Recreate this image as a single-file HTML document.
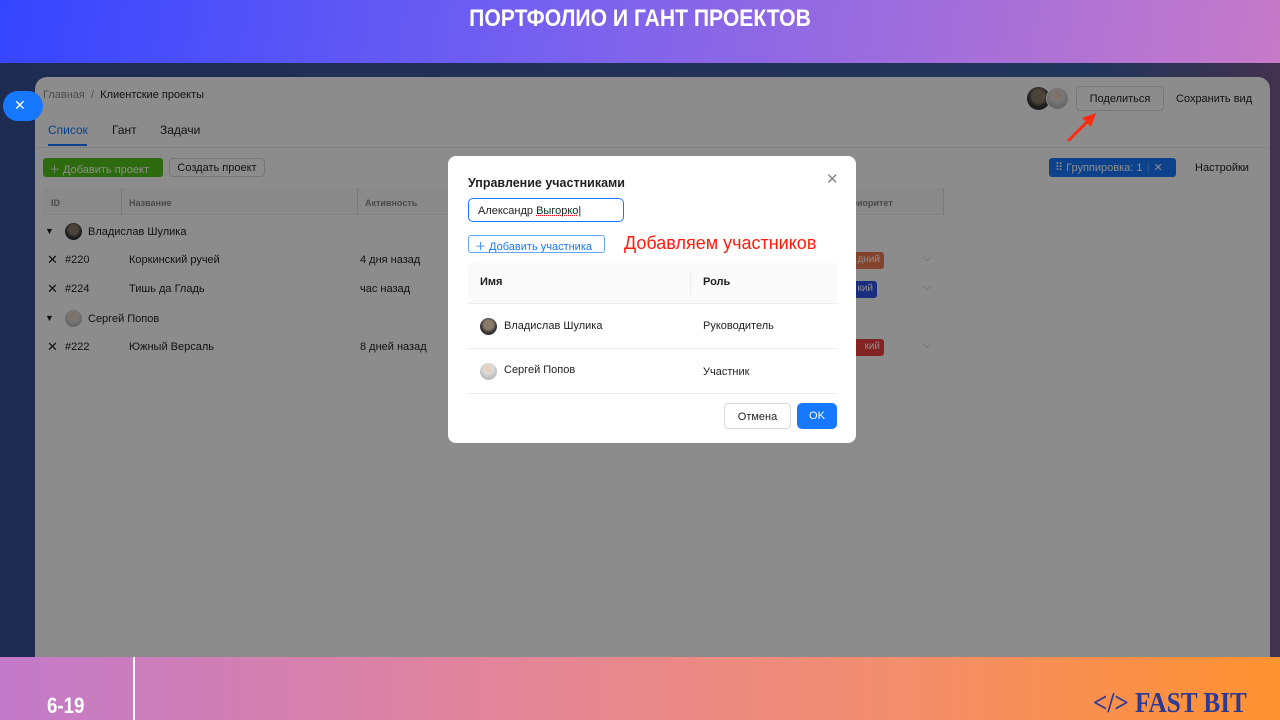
<!DOCTYPE html>
<html><head><meta charset="utf-8"><style>
*{box-sizing:border-box;margin:0;padding:0}
body{width:1280px;height:720px;overflow:hidden;position:relative;font-family:"Liberation Sans",sans-serif;background:#2c3c78}
.top{position:absolute;left:0;top:0;width:1280px;height:63px;background:linear-gradient(100deg,#3545ff 0%,#7a62ee 45%,#c67ac8 100%)}
.bg{position:absolute;left:0;top:63px;width:1280px;height:594px;background:linear-gradient(90deg,#3a5096,#3f5aa0 50%,#3d62a8 85%,#7a5a90)}
.panel{position:absolute;left:35px;top:77px;width:1235px;height:600px;background:#fff;border-radius:12px 12px 0 0;color:#1f1f1f;font-size:11px}
.a{position:absolute;white-space:nowrap}
.ov{position:absolute;left:0;top:63px;width:1280px;height:594px;background:rgba(0,0,0,0.45)}
.btn{position:absolute;border:1px solid #d9d9d9;border-radius:4px;background:#fff;text-align:center}
.av{position:absolute;border-radius:50%;background:radial-gradient(circle at 50% 40%,#8a7a6a 0 35%,#333 60%)}
.av2{position:absolute;border-radius:50%;background:radial-gradient(circle at 50% 35%,#e8d0c0 0 25%,#ddd 30%,#bbb 70%)}
.tag{position:absolute;height:17px;border-radius:3px;color:#fff;font-size:10px;padding:2px 4px}
.modal{position:absolute;left:448px;top:156px;width:408px;height:287px;background:#fff;border-radius:8px;font-size:11px;color:#1f1f1f}
.foot{position:absolute;left:0;top:657px;width:1280px;height:63px;background:linear-gradient(90deg,#c27ac9 0%,#e38599 40%,#f38e6e 70%,#ff9230 100%)}
</style></head><body>
<div class="top"><div class="a" style="left:0;width:1280px;top:5px;text-align:center;color:#fff;font-weight:bold;font-size:24px;transform:scaleX(0.88)">ПОРТФОЛИО И ГАНТ ПРОЕКТОВ</div></div>
<div class="bg"></div>
<div class="panel">
 <div class="a" style="left:8px;top:12px;color:#8c8c8c">Главная &nbsp;/&nbsp; <span style="color:#1f1f1f">Клиентские проекты</span></div>
 <div class="a" style="left:13px;top:46px;color:#1677ff;font-size:12px">Список</div>
 <div class="a" style="left:13px;top:67px;width:39px;height:2px;background:#1677ff"></div>
 <div class="a" style="left:77px;top:46px;font-size:12px">Гант</div>
 <div class="a" style="left:125px;top:46px;font-size:12px">Задачи</div>
 <div class="a" style="left:0;top:70px;width:1235px;height:1px;background:#eee"></div>
 <div class="a" style="left:8px;top:81px;width:120px;height:19px;background:#52c41a;border-radius:3px;color:#fff;padding:3px 6px">＋ Добавить проект</div>
 <div class="btn" style="left:134px;top:81px;width:96px;height:19px;padding-top:3px">Создать проект</div>
 <div class="a" style="left:8px;top:111px;width:900px;height:27px;background:#fafafa;border-bottom:1px solid #eee"></div>
 <div class="a" style="left:86px;top:111px;width:1px;height:27px;background:#ddd"></div>
 <div class="a" style="left:322px;top:111px;width:1px;height:27px;background:#ddd"></div>
 <div class="a" style="left:908px;top:111px;width:1px;height:27px;background:#ddd"></div>
 <div class="a" style="left:16px;top:121px;color:#888;font-size:9px;font-weight:bold">ID</div>
 <div class="a" style="left:94px;top:121px;color:#888;font-size:9px;font-weight:bold">Название</div>
 <div class="a" style="left:330px;top:121px;color:#888;font-size:9px;font-weight:bold">Активность</div>
 <div class="a" style="left:810px;top:121px;color:#888;font-size:9px;font-weight:bold">Приоритет</div>
 <div class="a" style="left:10px;top:149px;font-size:9px">▼</div>
 <div class="av" style="left:30px;top:146px;width:17px;height:17px"></div>
 <div class="a" style="left:53px;top:149px">Владислав Шулика</div>
 <div class="a" style="left:12px;top:175px;font-size:13px">✕</div><div class="a" style="left:30px;top:177px">#220</div><div class="a" style="left:94px;top:177px">Коркинский ручей</div><div class="a" style="left:325px;top:177px">4 дня назад</div>
 <div class="a" style="left:12px;top:204px;font-size:13px">✕</div><div class="a" style="left:30px;top:206px">#224</div><div class="a" style="left:94px;top:206px">Тишь да Гладь</div><div class="a" style="left:325px;top:206px">час назад</div>
 <div class="a" style="left:10px;top:236px;font-size:9px">▼</div>
 <div class="av2" style="left:30px;top:233px;width:17px;height:17px"></div>
 <div class="a" style="left:53px;top:236px">Сергей Попов</div>
 <div class="a" style="left:12px;top:262px;font-size:13px">✕</div><div class="a" style="left:30px;top:264px">#222</div><div class="a" style="left:94px;top:264px">Южный Версаль</div><div class="a" style="left:325px;top:264px">8 дней назад</div>
 <div class="tag" style="left:800px;top:175px;width:49px;background:#f07a50;text-align:right">дний</div>
 <div class="tag" style="left:800px;top:204px;width:42px;background:#2f54eb;text-align:right">кий</div>
 <div class="tag" style="left:800px;top:262px;width:49px;background:#f04040;text-align:right">кий</div>
 <div class="a" style="left:888px;top:175px;color:#aaa">⌵</div><div class="a" style="left:888px;top:204px;color:#aaa">⌵</div><div class="a" style="left:888px;top:262px;color:#aaa">⌵</div>
 <div class="av" style="left:992px;top:10px;width:23px;height:23px"></div>
 <div class="av2" style="left:1011px;top:10px;width:23px;height:23px;border:1px solid #fff"></div>
 <div class="btn" style="left:1041px;top:9px;width:88px;height:25px;padding-top:6px">Поделиться</div>
 <div class="a" style="left:1141px;top:16px">Сохранить вид</div>
 <div class="a" style="left:1014px;top:81px;width:127px;height:19px;background:#1677ff;border-radius:3px;color:#fff;padding:3px 6px">⠿ Группировка: 1 <span style="border-left:1px solid #4a8fff;padding-left:5px;margin-left:2px">✕</span></div>
 <div class="a" style="left:1160px;top:85px">Настройки</div>
</div>
<div class="ov"></div>
<div class="a" style="left:3px;top:91px;width:40px;height:30px;background:#1677ff;border-radius:15px;color:#fff;font-size:14px;padding:6px 0 0 11px">✕</div>
<svg class="a" style="left:1060px;top:110px" width="40" height="36"><line x1="8" y1="31" x2="30" y2="9" stroke="#ff2a10" stroke-width="3"/><polygon points="36,3 22,8 31,17" fill="#ff2a10"/></svg>
<div class="modal">
 <div class="a" style="left:20px;top:20px;font-size:12.5px;font-weight:bold">Управление участниками</div>
 <div class="a" style="left:378px;top:14px;font-size:15px;color:#888">✕</div>
 <div class="a" style="left:20px;top:42px;width:156px;height:24px;border:1px solid #1677ff;border-radius:5px;padding:6px 9px">Александр <span style="text-decoration:underline dotted red">Выгорко</span>|</div>
 <div class="a" style="left:20px;top:79px;width:137px;height:18px;border:1px solid #69a8ff;border-radius:3px;color:#1677ff;padding:2px 6px">＋ Добавить участника</div>
 <div class="a" style="left:176px;top:77px;font-size:18px;color:#ff1a0a">Добавляем участников</div>
 <div class="a" style="left:20px;top:106px;width:369px;height:42px;background:#fafafa;border-radius:6px 6px 0 0;border-bottom:1px solid #eee"></div>
 <div class="a" style="left:242px;top:116px;width:1px;height:22px;background:#eee"></div>
 <div class="a" style="left:32px;top:120px;font-weight:bold">Имя</div>
 <div class="a" style="left:255px;top:120px;font-weight:bold">Роль</div>
 <div class="av" style="left:32px;top:162px;width:17px;height:17px"></div>
 <div class="a" style="left:56px;top:164px">Владислав Шулика</div>
 <div class="a" style="left:255px;top:164px">Руководитель</div>
 <div class="a" style="left:20px;top:192px;width:369px;height:1px;background:#eee"></div>
 <div class="av2" style="left:32px;top:207px;width:17px;height:17px"></div>
 <div class="a" style="left:56px;top:208px">Сергей Попов</div>
 <div class="a" style="left:255px;top:210px">Участник</div>
 <div class="a" style="left:20px;top:237px;width:369px;height:1px;background:#eee"></div>
 <div class="btn" style="left:276px;top:247px;width:67px;height:26px;padding-top:7px">Отмена</div>
 <div class="a" style="left:349px;top:247px;width:40px;height:26px;background:#1677ff;border-radius:5px;color:#fff;text-align:center;padding-top:7px">OK</div>
</div>
<div class="foot">
 <div class="a" style="left:133px;top:0;width:2px;height:63px;background:#fff"></div>
 <div class="a" style="left:47px;top:36px;color:#fff;font-weight:bold;font-size:22px;transform:scaleX(0.85);transform-origin:left">6-19</div>
 <div class="a" style="left:1093px;top:31px;color:#2d3a94;font-family:'Liberation Serif',serif;font-weight:bold;font-size:28px;transform:scaleX(0.9);transform-origin:left">&lt;/&gt; FAST BIT</div>
</div>
</body></html>
